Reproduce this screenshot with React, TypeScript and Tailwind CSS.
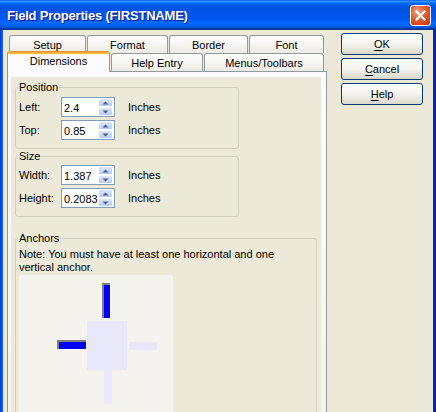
import React from "react";

function Tab({ label, className }: { label: string; className: string }) {
  return (
    <div
      className={`h-[18px] border border-b-0 border-[#919B9C] rounded-t-[3px] bg-gradient-to-b from-[#FFFFFF] to-[#ECEBE6] text-center leading-[13px] pt-[3px] whitespace-nowrap ${className}`}
    >
      {label}
    </div>
  );
}

function Arrow({ up }: { up?: boolean }) {
  return (
    <svg width="7" height="4" viewBox="0 0 7 4" className="block">
      {up ? (
        <path d="M3.5 0.5 L6.5 3.5 L0.5 3.5 Z" fill="#4D6185" />
      ) : (
        <path d="M0.5 0.5 L6.5 0.5 L3.5 3.5 Z" fill="#4D6185" />
      )}
    </svg>
  );
}

function Spin({ value }: { value: string }) {
  return (
    <div className="w-[54px] h-[20px] border border-[#7F9DB9] bg-white flex">
      <div className="flex-1 pl-[2px] pt-px leading-[18px] overflow-hidden whitespace-nowrap">{value}</div>
      <div className="w-[15px] mr-px flex flex-col">
        <div className="h-[9px] rounded-[2px] border border-[#FFFFFF] bg-gradient-to-b from-[#DDE6FB] to-[#B9CBF5] flex items-center justify-center">
          <Arrow up />
        </div>
        <div className="h-[9px] rounded-[2px] border border-[#FFFFFF] bg-gradient-to-b from-[#DDE6FB] to-[#B9CBF5] flex items-center justify-center">
          <Arrow />
        </div>
      </div>
    </div>
  );
}

function Row({ label, value }: { label: string; value: string }) {
  return (
    <div className="flex items-center h-[20px]">
      <div className="w-[42px] pt-px">{label}</div>
      <Spin value={value} />
      <div className="ml-[13px] pt-px">Inches</div>
    </div>
  );
}

function Btn({ u, rest }: { u: string; rest: string }) {
  return (
    <div className="h-[22px] border border-[#003C74] rounded-[3px] bg-gradient-to-b from-[#FFFFFF] via-[#F4F3EE] to-[#DCD8CB] flex items-center justify-center">
      <span>
        <span className="underline underline-offset-[2px]">{u}</span>
        {rest}
      </span>
    </div>
  );
}

export default function App() {
  return (
    <div className="w-[436px] h-[412px] overflow-hidden flex flex-col font-['Liberation_Sans',Arial,sans-serif] text-[11px] text-black">
      {/* Title bar */}
      <div className="h-[30px] shrink-0 flex items-start bg-[linear-gradient(to_bottom,#0058EE_0%,#3593FF_4%,#288EFF_6%,#127DFF_8%,#036FFC_10%,#0262EE_14%,#0057E5_20%,#0054E3_24%,#0055EB_56%,#005BF5_66%,#026AFE_76%,#0062EF_86%,#0052D6_92%,#0040AB_94%,#003092_100%)]">
        <div className="mt-[8px] ml-[7px] text-white font-bold text-[13px] leading-[15px] tracking-[-0.2px] whitespace-nowrap [text-shadow:1px_1px_#0F1089]">
          Field Properties (FIRSTNAME)
        </div>
        <div className="ml-auto mr-[5px] mt-[5px] w-[21px] h-[21px] rounded-[3px] border border-white bg-[radial-gradient(circle_at_35%_30%,#F2A689_0%,#E4683F_35%,#D9481C_70%,#C23A14_100%)] flex items-center justify-center">
          <svg width="11" height="11" viewBox="0 0 11 11">
            <path d="M1.5 1.5 L9.5 9.5 M9.5 1.5 L1.5 9.5" stroke="white" strokeWidth="2.2" strokeLinecap="square" />
          </svg>
        </div>
      </div>

      {/* Body */}
      <div className="flex flex-1 min-h-0">
        <div className="w-[3px] shrink-0 bg-gradient-to-r from-[#0831D9] to-[#1A6CF0]" />
        <div className="flex-1 min-w-0 bg-[#ECE9D8] flex pt-[3px] pl-[4px]">
          {/* Tabs + panel */}
          <div className="w-[320px] shrink-0 mt-[2px] flex flex-col">
            <div className="flex gap-[1px] pl-[2px]">
              <Tab label="Setup" className="w-[77px]" />
              <Tab label="Format" className="w-[81px]" />
              <Tab label="Border" className="w-[79px]" />
              <Tab label="Font" className="w-[75px]" />
            </div>
            <div className="flex items-end gap-[1px] -mt-[2px] relative z-10">
              <div className="w-[103px] h-[21px] -mb-px border-x border-[#919B9C] rounded-t-[3px] bg-[#FCFCFE] text-center overflow-hidden">
                <div className="h-[3px] bg-gradient-to-b from-[#E68B2C] to-[#FFC73C]" />
                <div className="leading-[13px] pt-[1px]">Dimensions</div>
              </div>
              <Tab label="Help Entry" className="w-[92px]" />
              <Tab label="Menus/Toolbars" className="w-[120px]" />
            </div>
            <div className="flex-1 border border-b-0 border-[#919B9C] bg-gradient-to-b from-[#FCFCFE] to-[#F4F3EE] pt-[5px] pl-[3px] pr-[5px] flex">
              <div className="flex-1 bg-[#ECE9D8] pl-[4px] pt-[4px] flex flex-col">
                <fieldset className="w-[224px] border border-[#D0D0BF] rounded-[3px] pl-[3px] pb-[8px]">
                  <legend className="-ml-px px-px leading-[13px]">Position</legend>
                  <div className="mt-[3px] flex flex-col gap-[3px]">
                    <Row label="Left:" value="2.4" />
                    <Row label="Top:" value="0.85" />
                  </div>
                </fieldset>
                <fieldset className="mt-[1px] w-[224px] border border-[#D0D0BF] rounded-[3px] pl-[3px] pb-[8px]">
                  <legend className="-ml-px px-px leading-[13px]">Size</legend>
                  <div className="mt-[2px] flex flex-col gap-[3px]">
                    <Row label="Width:" value="1.387" />
                    <Row label="Height:" value="0.2083" />
                  </div>
                </fieldset>
                <fieldset className="mt-[15px] w-[302px] h-[200px] border border-[#D0D0BF] rounded-[3px] pl-[3px]">
                  <legend className="-ml-px px-px leading-[13px]">Anchors</legend>
                  <div className="mt-[3px] leading-[13px] whitespace-nowrap">
                    Note: You must have at least one horizontal and one
                    <br />
                    vertical anchor.
                  </div>
                  <div className="mt-[1px] relative w-[154px] h-[150px] bg-[#F4F3EE]">
                    {/* top anchor (active) */}
                    <div className="absolute left-[83px] top-[8px] w-[8px] h-[35px] border-t-2 border-l-2 border-[#808080] bg-[#0000FF] shadow-[1px_1px_0_#FFFFFF]" />
                    {/* left anchor (active) */}
                    <div className="absolute left-[38px] top-[65px] w-[29px] h-[9px] border-t-2 border-l-2 border-[#808080] bg-[#0000FF] shadow-[1px_1px_0_#FFFFFF]" />
                    {/* center */}
                    <div className="absolute left-[68px] top-[46px] w-[40px] h-[49px] bg-[#E8E8FA]" />
                    {/* right anchor (inactive) */}
                    <div className="absolute left-[110px] top-[67px] w-[28px] h-[8px] bg-[#E8E8FA]" />
                    {/* bottom anchor (inactive) */}
                    <div className="absolute left-[85px] top-[95px] w-[8px] h-[34px] bg-[#E8E8FA]" />
                  </div>
                </fieldset>
              </div>
            </div>
          </div>

          {/* Buttons */}
          <div className="ml-[14px] w-[82px] shrink-0 flex flex-col gap-[3px]">
            <Btn u="O" rest="K" />
            <Btn u="C" rest="ancel" />
            <Btn u="H" rest="elp" />
          </div>
        </div>
        <div className="w-[3px] shrink-0 bg-gradient-to-r from-[#0032C8] to-[#0019A0]" />
      </div>
    </div>
  );
}
